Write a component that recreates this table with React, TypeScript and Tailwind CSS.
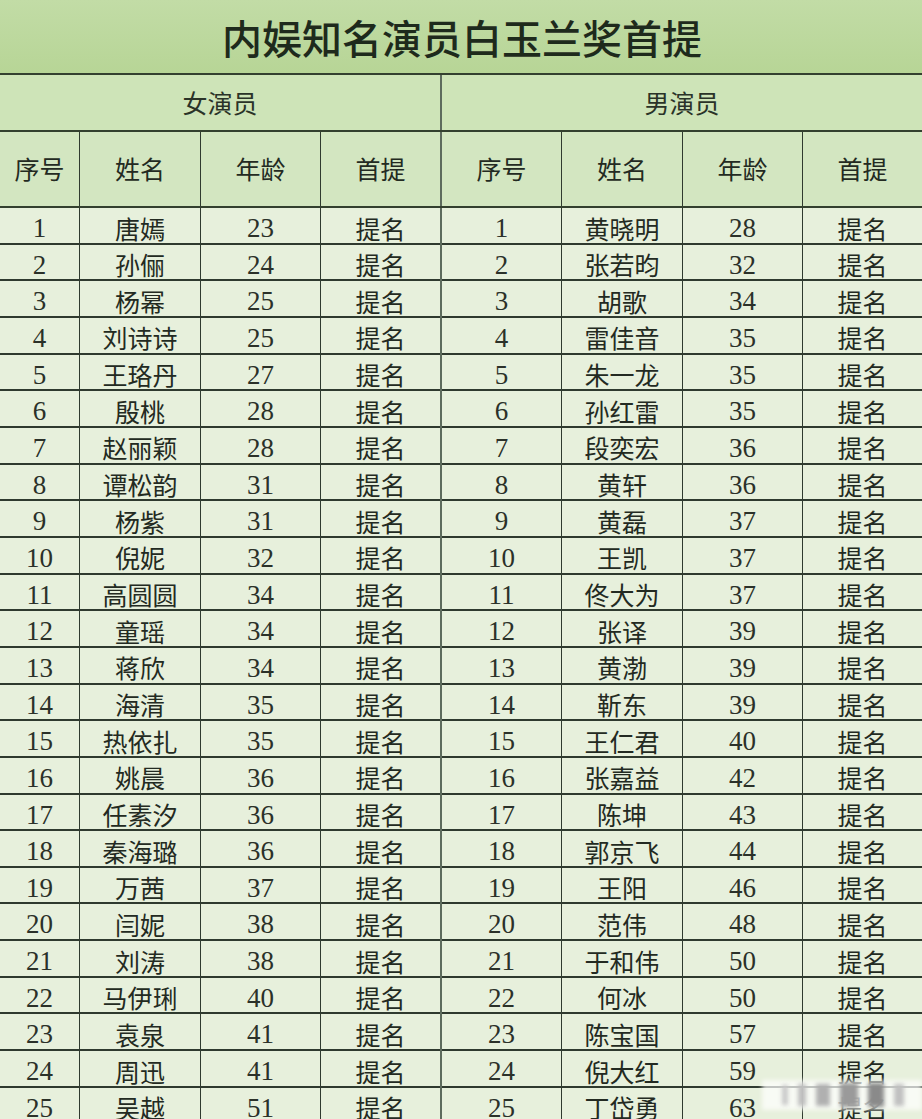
import React from "react";

const female: [string, number][] = [
  ["唐嫣", 23], ["孙俪", 24], ["杨幂", 25], ["刘诗诗", 25], ["王珞丹", 27],
  ["殷桃", 28], ["赵丽颖", 28], ["谭松韵", 31], ["杨紫", 31], ["倪妮", 32],
  ["高圆圆", 34], ["童瑶", 34], ["蒋欣", 34], ["海清", 35], ["热依扎", 35],
  ["姚晨", 36], ["任素汐", 36], ["秦海璐", 36], ["万茜", 37], ["闫妮", 38],
  ["刘涛", 38], ["马伊琍", 40], ["袁泉", 41], ["周迅", 41], ["吴越", 51],
];
const male: [string, number][] = [
  ["黄晓明", 28], ["张若昀", 32], ["胡歌", 34], ["雷佳音", 35], ["朱一龙", 35],
  ["孙红雷", 35], ["段奕宏", 36], ["黄轩", 36], ["黄磊", 37], ["王凯", 37],
  ["佟大为", 37], ["张译", 39], ["黄渤", 39], ["靳东", 39], ["王仁君", 40],
  ["张嘉益", 42], ["陈坤", 43], ["郭京飞", 44], ["王阳", 46], ["范伟", 48],
  ["于和伟", 50], ["何冰", 50], ["陈宝国", 57], ["倪大红", 59], ["丁岱勇", 63],
];

const cjk = "font-['Noto_Sans_CJK_SC',sans-serif]";
const num = "font-['Liberation_Serif','Noto_Sans_CJK_SC',serif]";

const cols = "grid grid-cols-[80px_121px_120px_121px_120px_121px_120px_119px]";

function Cell({ children, last, divider, isNum }: { children: React.ReactNode; last?: boolean; divider?: boolean; isNum?: boolean }) {
  const border = last ? "" : divider ? "border-r-2 border-r-[#5d6b5d]" : "border-r border-r-[#2f3a2f]";
  return (
    <div className={`flex items-center justify-center ${border} ${isNum ? `${num} text-[27px] text-[#2b3129]` : `${cjk} text-[25px]`}`}>
      {children}
    </div>
  );
}

export default function App() {
  return (
    <div className="relative w-[922px] h-[1119px] overflow-hidden bg-[#e7f0dc] text-[#232a22]">
      <div className="h-[75px] flex items-center justify-center bg-gradient-to-b from-[#c2dca6] to-[#b7d596] border-b-2 border-b-[#33402f]">
        <div className={`${cjk} text-[40px] font-medium text-[#1e2a1c] leading-none pl-[2px]`}>内娱知名演员白玉兰奖首提</div>
      </div>
      <div className="h-[57px] flex bg-[#cee4b8] border-b-2 border-b-[#33402f]">
        <div className={`w-[442px] flex items-center justify-center border-r-2 border-r-[#5d6b5d] ${cjk} text-[25px] text-[#2a3328]`}>女演员</div>
        <div className={`flex-1 flex items-center justify-center ${cjk} text-[25px] text-[#2a3328]`}>男演员</div>
      </div>
      <div className={`${cols} h-[76px] bg-[#d3e6c1] border-b-2 border-b-[#33402f]`}>
        {["序号", "姓名", "年龄", "首提", "序号", "姓名", "年龄", "首提"].map((t, i) => (
          <Cell key={i} divider={i === 3} last={i === 7}>{t}</Cell>
        ))}
      </div>
      {female.map((f, i) => {
        const m = male[i];
        return (
          <div key={i} className={`${cols} h-[36.67px] border-b-2 border-b-[#2f3a2f]`}>
            <Cell isNum>{i + 1}</Cell>
            <Cell>{f[0]}</Cell>
            <Cell isNum>{f[1]}</Cell>
            <Cell divider>提名</Cell>
            <Cell isNum>{i + 1}</Cell>
            <Cell>{m[0]}</Cell>
            <Cell isNum>{m[1]}</Cell>
            <Cell last>提名</Cell>
          </div>
        );
      })}
      <div className="absolute left-[762px] top-[1080px] w-[160px] h-[30px] bg-white/70 blur-[2px] flex items-center gap-[10px] pl-[20px]">
        <div className="w-[6px] h-[20px] bg-[#c8c8c8]" />
        <div className="w-[8px] h-[22px] bg-[#bdbdbd]" />
        <div className="w-[14px] h-[22px] bg-[#b0b0b0]" />
        <div className="w-[18px] h-[24px] bg-[#9a9a9a]" />
        <div className="w-[16px] h-[24px] bg-[#8a8a8a]" />
        <div className="w-[10px] h-[22px] bg-[#c0c0c0]" />
      </div>
    </div>
  );
}
